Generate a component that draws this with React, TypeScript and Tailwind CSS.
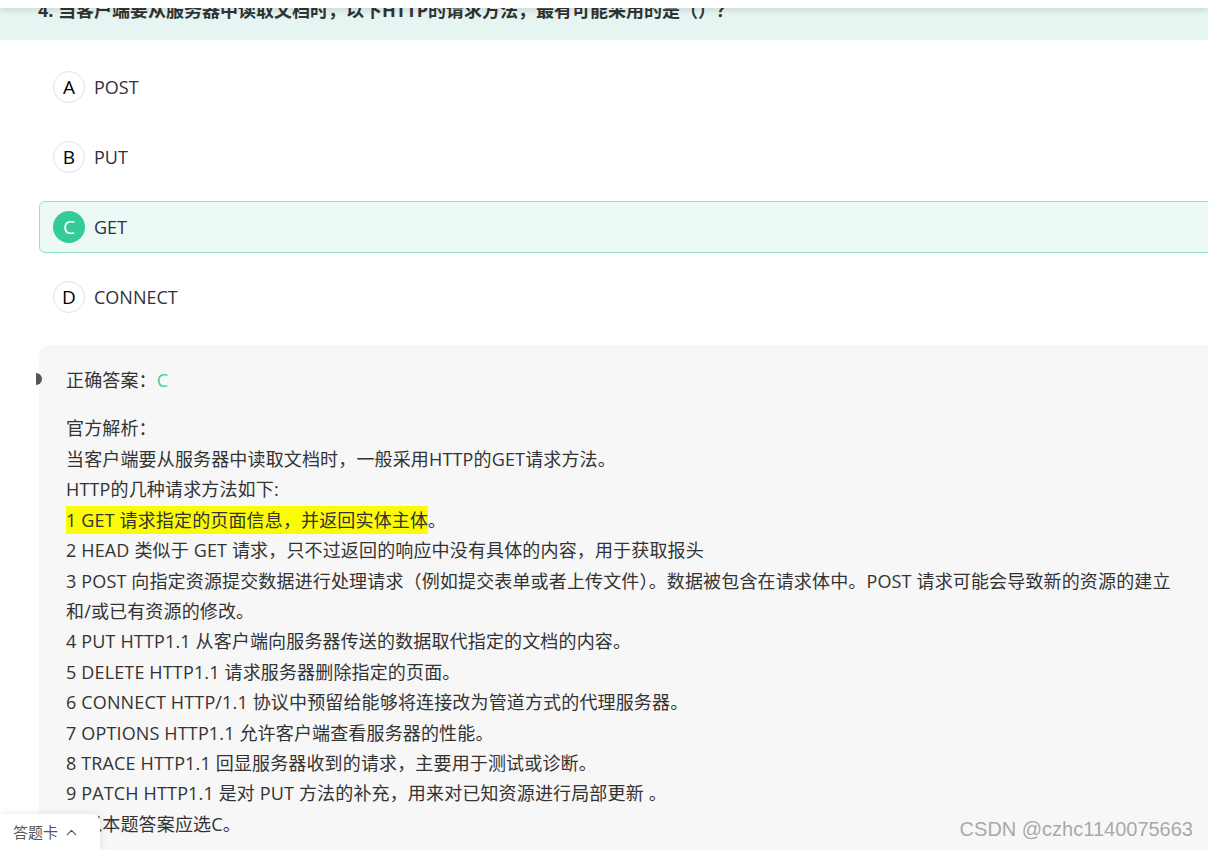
import { ChevronUp } from "lucide-react";

const options = [
  { key: "A", label: "POST" },
  { key: "B", label: "PUT" },
  { key: "C", label: "GET", correct: true },
  { key: "D", label: "CONNECT" },
];

const lines = [
  "当客户端要从服务器中读取文档时，一般采用HTTP的GET请求方法。",
  "HTTP的几种请求方法如下:",
  null,
  "2 HEAD 类似于 GET 请求，只不过返回的响应中没有具体的内容，用于获取报头",
  "3 POST 向指定资源提交数据进行处理请求（例如提交表单或者上传文件）。数据被包含在请求体中。POST 请求可能会导致新的资源的建立",
  "和/或已有资源的修改。",
  "4 PUT HTTP1.1 从客户端向服务器传送的数据取代指定的文档的内容。",
  "5 DELETE HTTP1.1 请求服务器删除指定的页面。",
  "6 CONNECT HTTP/1.1 协议中预留给能够将连接改为管道方式的代理服务器。",
  "7 OPTIONS HTTP1.1 允许客户端查看服务器的性能。",
  "8 TRACE HTTP1.1 回显服务器收到的请求，主要用于测试或诊断。",
  "9 PATCH HTTP1.1 是对 PUT 方法的补充，用来对已知资源进行局部更新 。",
  "所以本题答案应选C。",
];

const font = { fontFamily: '"Open Sans", "Noto Sans CJK SC", sans-serif' };

export default function App() {
  return (
    <div className="relative w-[1208px] h-[850px] overflow-hidden bg-white text-[#333]" style={font}>
      {/* top header shadow */}
      <div className="absolute top-0 left-0 right-0 h-[8px] bg-white shadow-[0_2px_6px_rgba(0,0,0,0.12)] z-10" />

      <div className="h-[40px] bg-[#e6f5f1] overflow-hidden">
        <div className="pl-[38px] mt-[-2px] text-[18px] leading-[24px] font-bold text-[#333] whitespace-nowrap">
          4. 当客户端要从服务器中读取文档时，以下HTTP的请求方法，最有可能采用的是（）？
        </div>
      </div>

      <div className="pl-[39px] pt-[21px] flex flex-col gap-[18px]">
        {options.map((o) => (
          <div
            key={o.key}
            className={
              o.correct
                ? "w-[1200px] h-[52px] flex items-center gap-[9px] pl-[13px] rounded-[6px] border border-[#97e3c5] bg-[#edf9f6]"
                : "w-[1200px] h-[52px] flex items-center gap-[9px] pl-[13px] border border-transparent"
            }
          >
            <div
              className={
                o.correct
                  ? "w-[32px] h-[32px] rounded-full bg-[#34ca99] text-white flex items-center justify-center text-[19px]"
                  : "w-[32px] h-[32px] rounded-full border border-[#e2e2e2] bg-white text-black flex items-center justify-center text-[19px]"
              }
            >
              {o.key}
            </div>
            <span className="text-[18px] text-[#2f3140]">{o.label}</span>
          </div>
        ))}
      </div>

      <div className="relative ml-[39px] mt-[22px] h-[600px] rounded-tl-[10px] bg-[#f7f7f7] pl-[27px] pt-[20px] text-[18px] tracking-[0.15px]">
        <div className="absolute left-[-3px] top-[28px] w-[6px] h-[12px] rounded-r-full bg-[#555]" />
        <div className="leading-[30px]">
          正确答案：<span className="text-[#3ccf9f]">C</span>
        </div>
        <div className="mt-[17px] leading-[30px]">
          <div className="h-[32px] leading-[32px]">官方解析：</div>
          {lines.map((l, i) =>
            l === null ? (
              <div key={i} className="h-[30.4px] whitespace-nowrap">
                <span className="bg-[#fbfb06] py-[2px]">1 GET 请求指定的页面信息，并返回实体主体</span>。
              </div>
            ) : (
              <div key={i} className="h-[30.4px] whitespace-nowrap">
                {l}
              </div>
            )
          )}
        </div>
      </div>

      {/* answer card tab */}
      <div className="absolute left-0 bottom-0 w-[100px] h-[36px] bg-white rounded-tr-[8px] shadow-[0_0_8px_rgba(0,0,0,0.1)] flex items-center pl-[13px] gap-[5px] text-[15px] text-[#555]">
        答题卡
        <ChevronUp size={17} strokeWidth={1.8} />
      </div>

      {/* watermark */}
      <div
        className="absolute right-[15px] bottom-[6px] text-[20px] text-[#a8a8a8] [text-shadow:0_0_1px_#fff]"
        style={{ fontFamily: '"Liberation Sans", Arial, sans-serif' }}
      >
        CSDN @czhc1140075663
      </div>
    </div>
  );
}
